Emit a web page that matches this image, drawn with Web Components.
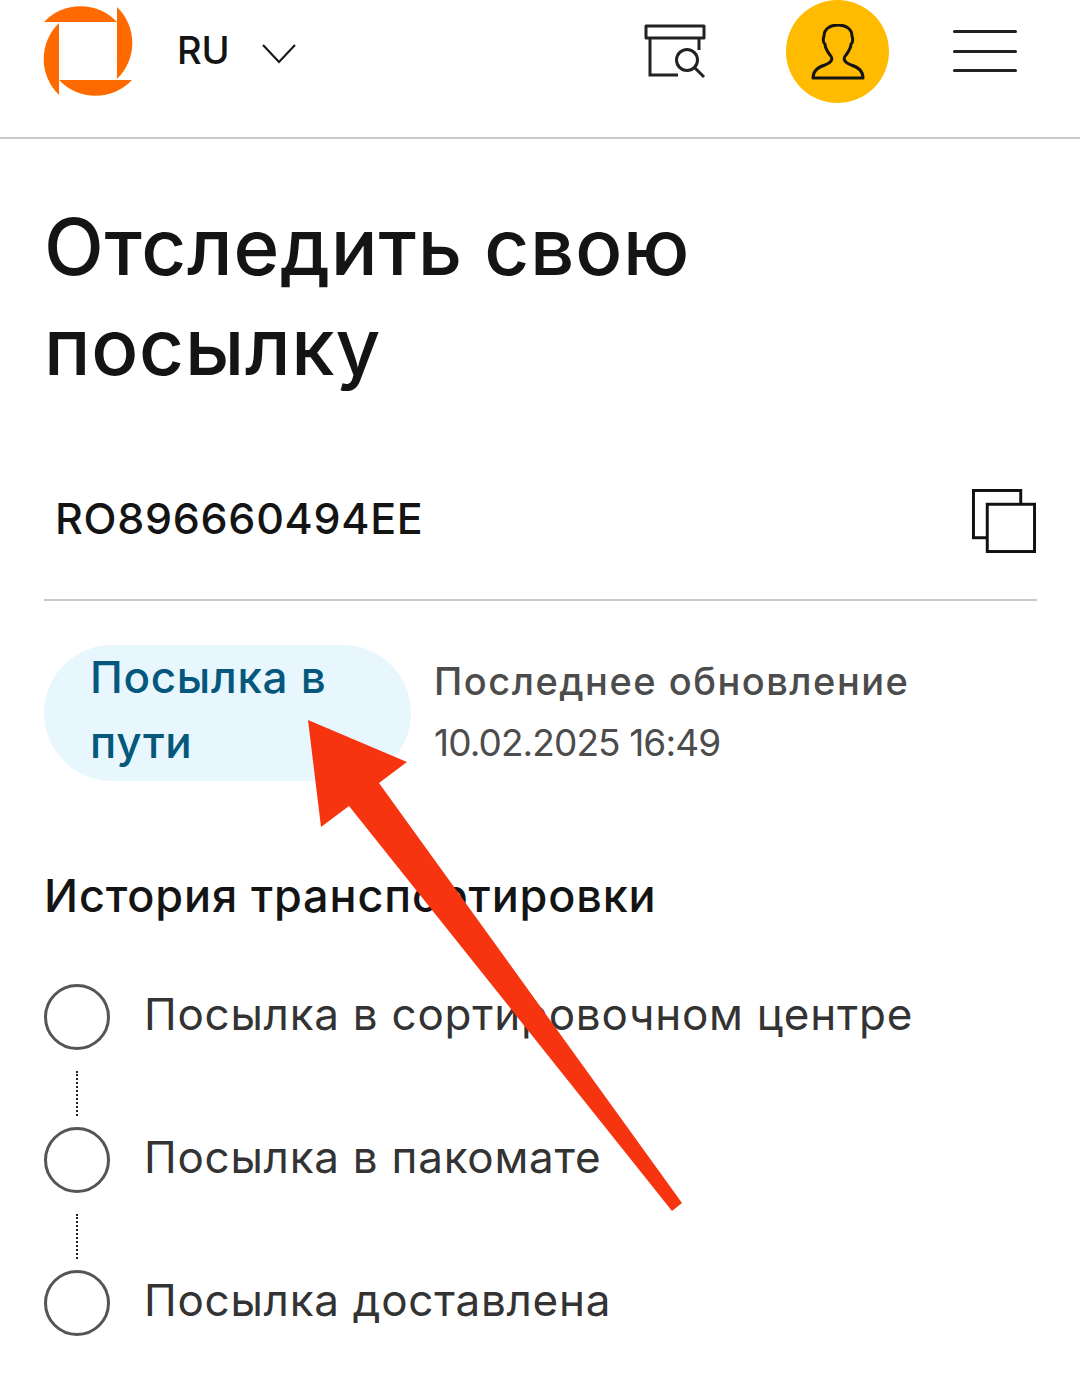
<!DOCTYPE html>
<html lang="ru"><head><meta charset="utf-8"><title>Отследить</title>
<style>
html,body{margin:0;padding:0;background:#fff}
body{font-family:Inter,"Noto Sans",sans-serif;color:#141414;width:1080px;height:1381px;overflow:hidden;position:relative}
</style></head><body>
<site-header></site-header>
<tracking-page>
  <h-title slot="title">Отследить свою<br>посылку</h-title>
  <parcel-code slot="code">RO896660494EE</parcel-code>
  <status-row slot="status"><span slot="pill">Посылка в<br>пути</span><span slot="label">Последнее обновление</span><span slot="date">10.02.2025 16:49</span></status-row>
  <history-list slot="history">
    <history-step>Посылка в сортировочном центре</history-step>
    <history-step>Посылка в пакомате</history-step>
    <history-step last>Посылка доставлена</history-step>
  </history-list>
</tracking-page>
<red-arrow></red-arrow>
<script>
function def(name,html){customElements.define(name,class extends HTMLElement{constructor(){super();this.attachShadow({mode:'open'}).innerHTML=html}})}
def('site-header',`<style>
:host{display:flex;align-items:flex-start;box-sizing:border-box;height:139px;border-bottom:2px solid #c9c9c9;padding:0 63px 0 44px}
.logo{margin-top:7px;width:88px;height:88px;flex:none;overflow:visible}
.lang{font-size:38px;font-weight:500;margin:25px 0 0 45px;line-height:50px;width:85px;flex:none}
.chev{margin-top:44px;flex:none}
.sp{flex:1}
.box{margin-top:24px;flex:none;margin-right:80px}
.user{width:103px;height:103px;border-radius:50%;background:#ffbb00;flex:none;display:flex;align-items:center;justify-content:center;margin-right:64px}
.menu{margin-top:30px;flex:none;width:64px;height:42px;display:flex;flex-direction:column;justify-content:space-between}
.menu i{display:block;height:3px;background:#222;border-radius:2px}
</style>
<svg class="logo" viewBox="0 0 88 88"><g fill="#ff6a00">
<path d="M0 15 L73 15 A50 50 0 0 0 0 15Z"/>
<path d="M15 16 L15 88 A50 50 0 0 1 15 16Z"/>
<path d="M73 0 L73 72 A50 50 0 0 0 73 0Z"/>
<path d="M15 73 L88 73 A50 50 0 0 1 15 73Z"/>
</g></svg>
<div class="lang">RU</div>
<svg class="chev" width="34" height="20" viewBox="0 0 34 20"><path d="M1 1 L17 18 L33 1" fill="none" stroke="#1a1a1a" stroke-width="2.200"/></svg>
<div class="sp"></div>
<svg class="box" width="62" height="56" viewBox="0 0 62 56" fill="none" stroke="#222" stroke-width="3">
<path d="M2 2 H60 V14 H2 Z" stroke-linejoin="round"/><path d="M6 14 V51 H34"/><path d="M55 14 V26"/><circle cx="43" cy="36" r="10.500"/><path d="M51 44 L60 53"/></svg>
<div class="user"><svg width="54" height="56" viewBox="0 0 54 56" fill="none" stroke="#141414" stroke-width="3" stroke-linejoin="round"><path d="M2 54 H52 C52 47 47 43 40 41 L36 39 C33 37 32 34 35 31 C38 27 40 24 40 20 C42 19 42 15 41 12 C41 5 35 1 27 1 C19 1 13 5 13 12 C12 15 12 19 14 20 C14 24 16 27 19 31 C22 34 21 37 18 39 L14 41 C7 43 2 47 2 54Z"/></svg></div>
<div class="menu"><i></i><i></i><i></i></div>`);
def('tracking-page',`<style>
:host{display:block;padding:0 43px 0 44px}
.t{display:block;margin-top:58px}
.c{display:block;margin-top:90px}
.s{display:block;margin-top:44px}
.h{display:block;margin-top:85px}
</style>
<div class="t"><slot name="title"></slot></div>
<div class="c"><slot name="code"></slot></div>
<div class="s"><slot name="status"></slot></div>
<div class="h"><slot name="history"></slot></div>`);
def('h-title',`<style>:host{display:block;font-size:78px;line-height:100px;font-weight:500;color:#141414;letter-spacing:.75px}</style><slot></slot>`);
def('parcel-code',`<style>
:host{display:flex;align-items:flex-start;justify-content:space-between;box-sizing:border-box;height:114px;border-bottom:2px solid #c9c9c9;padding:0 1px 0 11px}
.v{font-size:43px;line-height:62px;font-weight:500;letter-spacing:.7px}
svg{margin-top:2px}
</style><div class="v"><slot></slot></div>
<svg width="64" height="64" viewBox="0 0 65 65" fill="#fff" stroke="#111" stroke-width="3"><rect x="1.500" y="1.500" width="48" height="48"/><rect x="15.500" y="15.500" width="48" height="48"/></svg>`);
def('status-row',`<style>
:host{display:flex;align-items:flex-start}
.p{box-sizing:border-box;width:367px;height:136px;border-radius:68px;background:#e8f6fe;color:#05587c;font-size:44px;line-height:65px;font-weight:500;letter-spacing:.7px;padding:0 0 0 46px;flex:none}
.i{margin-left:23px;color:#4c4c4c;font-size:38px;line-height:62px;font-weight:500;padding-top:5px;letter-spacing:1.5px}
.d{font-weight:400;font-size:37px;letter-spacing:-.9px}
.i span{display:block}
</style><div class="p"><slot name="pill"></slot></div>
<div class="i"><span><slot name="label"></slot></span><span class="d"><slot name="date"></slot></span></div>`);
def('history-list',`<style>
:host{display:block}
h2{margin:0 0 58px 0;font-size:45px;line-height:60px;font-weight:500;color:#141414;letter-spacing:.85px}
</style><h2>История транспортировки</h2><slot></slot>`);
def('history-step',`<style>
:host{display:flex;align-items:flex-start;height:143px;color:#333}
.m{flex:none;width:66px;margin-right:34px;display:flex;flex-direction:column;align-items:center}
.c{box-sizing:border-box;width:66px;height:66px;border-radius:50%;border:3px solid #555}
.l{margin-top:21px;width:0;height:45px;border-left:2px dotted #222}
:host([last]) .l{display:none}
.t{font-size:44px;line-height:60px;letter-spacing:.75px}
</style><div class="m"><div class="c"></div><div class="l"></div></div><div class="t"><slot></slot></div>`);
def('red-arrow',`<style>:host{position:absolute;left:0;top:0;width:1080px;height:1381px;pointer-events:none}svg{display:block}</style>
<svg width="1080" height="1381" viewBox="0 0 1080 1381"><polygon fill="#f63510" points="308,720 407,762 379,783 682,1203 672,1211 349,806 321,827"/></svg>`);
</script>
</body></html>
